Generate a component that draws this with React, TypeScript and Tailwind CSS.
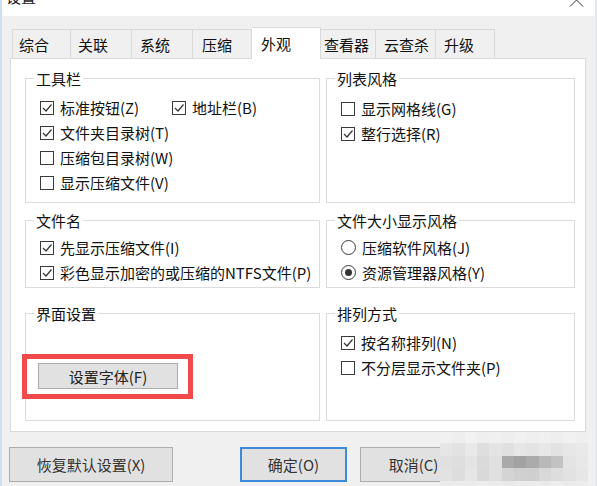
import React from "react";

const tabs = [
  { label: "综合", cls: "w-[59px] pl-[6px]" },
  { label: "关联", cls: "w-[61px] pl-[7px] border-l-0" },
  { label: "系统", cls: "w-[61px] pl-[8px] border-l-0" },
  { label: "压缩", cls: "w-[59px] pl-[9px] border-l-0" },
  { label: "外观", cls: "w-[69px] pl-[9px] border-l-0", active: true },
  { label: "查看器", cls: "w-[55px] pl-[3px] border-l-0" },
  { label: "云查杀", cls: "w-[60px] pl-[8px] border-l-0" },
  { label: "升级", cls: "w-[59px] pl-[8px] border-l-0 border-r" },
];

const mosaic: string[][] = [
  ["bg-[#f1f1f1]", "bg-[#eeeeee]", "bg-[#f2f2f2]", "bg-[#efefef]", "bg-[#f0f0f0]", "bg-[#eeeeee]", "bg-[#f1f1f1]", "bg-[#efefef]", "bg-[#f0f0f0]", "bg-[#eeeeee]", "bg-[#f1f1f1]", "bg-[#efefef]"],
  ["bg-[#e6e6e6]", "bg-[#e2e2e2]", "bg-[#e9e9e9]", "bg-[#dedede]", "bg-[#e4e4e4]", "bg-[#e0e0e0]", "bg-[#e6e6e6]", "bg-[#e3e3e3]", "bg-[#e8e8e8]", "bg-[#e2e2e2]", "bg-[#e7e7e7]", "bg-[#e9e9e9]"],
  ["bg-[#e0e0e0]", "bg-[#dedede]", "bg-[#e4e4e4]", "bg-[#dadada]", "bg-[#e0e0e0]", "bg-[#a9a9a9]", "bg-[#a2a2a2]", "bg-[#ababab]", "bg-[#b9b9b9]", "bg-[#c2c2c2]", "bg-[#e4e4e4]", "bg-[#e8e8e8]"],
  ["bg-[#e2e2e2]", "bg-[#dddddd]", "bg-[#e6e6e6]", "bg-[#d9d9d9]", "bg-[#e0e0e0]", "bg-[#d4d4d4]", "bg-[#d0d0d0]", "bg-[#cfcfcf]", "bg-[#d8d8d8]", "bg-[#dddddd]", "bg-[#e2e2e2]", "bg-[#e6e6e6]"],
  ["bg-[#ebebeb]", "bg-[#ececec]", "bg-[#eaeaea]", "bg-[#ededed]", "bg-[#ebebeb]", "bg-[#e9e9e9]", "bg-[#ebebeb]", "bg-[#ececec]", "bg-[#eaeaea]", "bg-[#ededed]", "bg-[#ebebeb]", "bg-[#ececec]"],
];

function Check({ checked }: { checked?: boolean }) {
  return (
    <span className="w-[14px] h-[14px] border border-[#3a3a3a] bg-white flex items-center justify-center shrink-0">
      {checked && (
        <svg width="12" height="12" viewBox="0 0 12 12" fill="none">
          <polyline points="2,6 5,9 10.5,2.5" stroke="#333" strokeWidth="1.2" />
        </svg>
      )}
    </span>
  );
}

function Radio({ checked }: { checked?: boolean }) {
  return (
    <span className="w-[15px] h-[15px] rounded-full border border-[#3a3a3a] bg-white flex items-center justify-center shrink-0">
      {checked && <span className="w-[7px] h-[7px] rounded-full bg-[#333]" />}
    </span>
  );
}

function Item({
  label,
  checked,
  radio,
  className = "",
}: {
  label: string;
  checked?: boolean;
  radio?: boolean;
  className?: string;
}) {
  return (
    <div className={`flex items-center gap-[6px] h-[25px] text-[15px] leading-none text-[#111] whitespace-nowrap ${className}`}>
      {radio ? <Radio checked={checked} /> : <Check checked={checked} />}
      <span>{label}</span>
    </div>
  );
}

function Group({
  title,
  className = "",
  children,
}: {
  title: string;
  className?: string;
  children?: React.ReactNode;
}) {
  return (
    <div className={`relative border border-[#dcdcdc] ${className}`}>
      <span className="absolute left-[8px] top-[-9px] bg-white px-[2px] text-[15px] leading-[18px] text-[#111]">
        {title}
      </span>
      {children}
    </div>
  );
}

export default function App() {
  return (
    <div className="w-[597px] h-[486px] bg-[#f0f0f0] relative overflow-hidden border-l-[2px] border-l-[#cde0f2] border-r-[2px] border-r-[#e2e8ee] font-['Noto_Sans_CJK_SC','Noto_Sans',sans-serif]">
      {/* Title bar */}
      <div className="h-[16px] bg-white overflow-hidden relative">
        <div className="mt-[-11px] ml-[4px] text-[15px] leading-[16px] text-[#222]">设置</div>
        <svg className="absolute left-[567px] top-0" width="15" height="7" viewBox="0 0 15 7" fill="none">
          <polyline points="1,6.5 7.5,0 14,6.5" stroke="#333" strokeWidth="1" />
        </svg>
      </div>

      {/* Tabs */}
      <div className="mt-[11px] h-[31px] flex items-end pl-[10px]">
        {tabs.map((t) =>
          t.active ? (
            <div
              key={t.label}
              className={`h-[32px] mb-[-1px] relative z-10 bg-white border border-b-0 border-[#d9d9d9] flex items-center text-[15px] leading-none text-[#111] ${t.cls}`}
            >
              {t.label}
            </div>
          ) : (
            <div
              key={t.label}
              className={`h-[29px] bg-[#f0f0f0] border border-b-0 border-[#d9d9d9] flex items-center text-[15px] leading-none text-[#111] ${t.cls}`}
            >
              {t.label}
            </div>
          )
        )}
      </div>

      {/* Panel */}
      <div className="ml-[8px] w-[576px] h-[374px] bg-white border border-[#d9d9d9] pt-[19px] pl-[14px]">
        <div className="grid grid-cols-[295px_249px] gap-x-[6px]">
          <Group title="工具栏" className="h-[125px] pt-[16px] pl-[14px]">
            <div className="flex">
              <Item label="标准按钮(Z)" checked className="w-[132px]" />
              <Item label="地址栏(B)" checked />
            </div>
            <Item label="文件夹目录树(T)" checked />
            <Item label="压缩包目录树(W)" />
            <Item label="显示压缩文件(V)" />
          </Group>
          <Group title="列表风格" className="h-[125px] pt-[17px] pl-[14px]">
            <Item label="显示网格线(G)" />
            <Item label="整行选择(R)" checked />
          </Group>

          <Group title="文件名" className="h-[68px] mt-[17px] pt-[14px] pl-[14px]">
            <Item label="先显示压缩文件(I)" checked />
            <Item label="彩色显示加密的或压缩的NTFS文件(P)" checked />
          </Group>
          <Group title="文件大小显示风格" className="h-[68px] mt-[17px] pt-[14px] pl-[14px]">
            <Item label="压缩软件风格(J)" radio />
            <Item label="资源管理器风格(Y)" radio checked />
          </Group>

          <Group title="界面设置" className="h-[108px] mt-[25px] pt-[49px] pl-[12px]">
            <button className="w-[140px] h-[26px] bg-[#e1e1e1] border border-[#adadad] text-[15px] leading-none text-[#222] flex items-center justify-center">
              设置字体(F)
            </button>
            <div className="absolute left-[-4px] top-[40px] w-[171px] h-[45px] border-[5px] border-[#f04a4a] pointer-events-none" />
          </Group>
          <Group title="排列方式" className="h-[108px] mt-[25px] pt-[16px] pl-[14px]">
            <Item label="按名称排列(N)" checked />
            <Item label="不分层显示文件夹(P)" />
          </Group>
        </div>
      </div>

      {/* Bottom buttons */}
      <div className="mt-[15px] flex pl-[7px]">
        <button className="w-[164px] h-[35px] bg-[#e1e1e1] border border-[#adadad] text-[15px] leading-none text-[#333] flex items-center justify-center">
          恢复默认设置(X)
        </button>
        <button className="ml-[67px] w-[107px] h-[35px] bg-[#e1e1e1] border-[2px] border-[#3d8bd8] text-[15px] leading-none text-[#333] flex items-center justify-center">
          确定(O)
        </button>
        <button className="ml-[13px] w-[107px] h-[35px] bg-[#e1e1e1] border border-[#adadad] text-[15px] leading-none text-[#333] flex items-center justify-center">
          取消(C)
        </button>
      </div>

      {/* Mosaic watermark overlay */}
      <div className="absolute left-[438px] top-[432px] w-[148px] h-[54px] grid grid-cols-12 grid-rows-[11px_13px_12px_13px_5px]">
        {mosaic.map((row, r) =>
          row.map((c, i) => <div key={`${r}-${i}`} className={c} />)
        )}
      </div>
    </div>
  );
}
